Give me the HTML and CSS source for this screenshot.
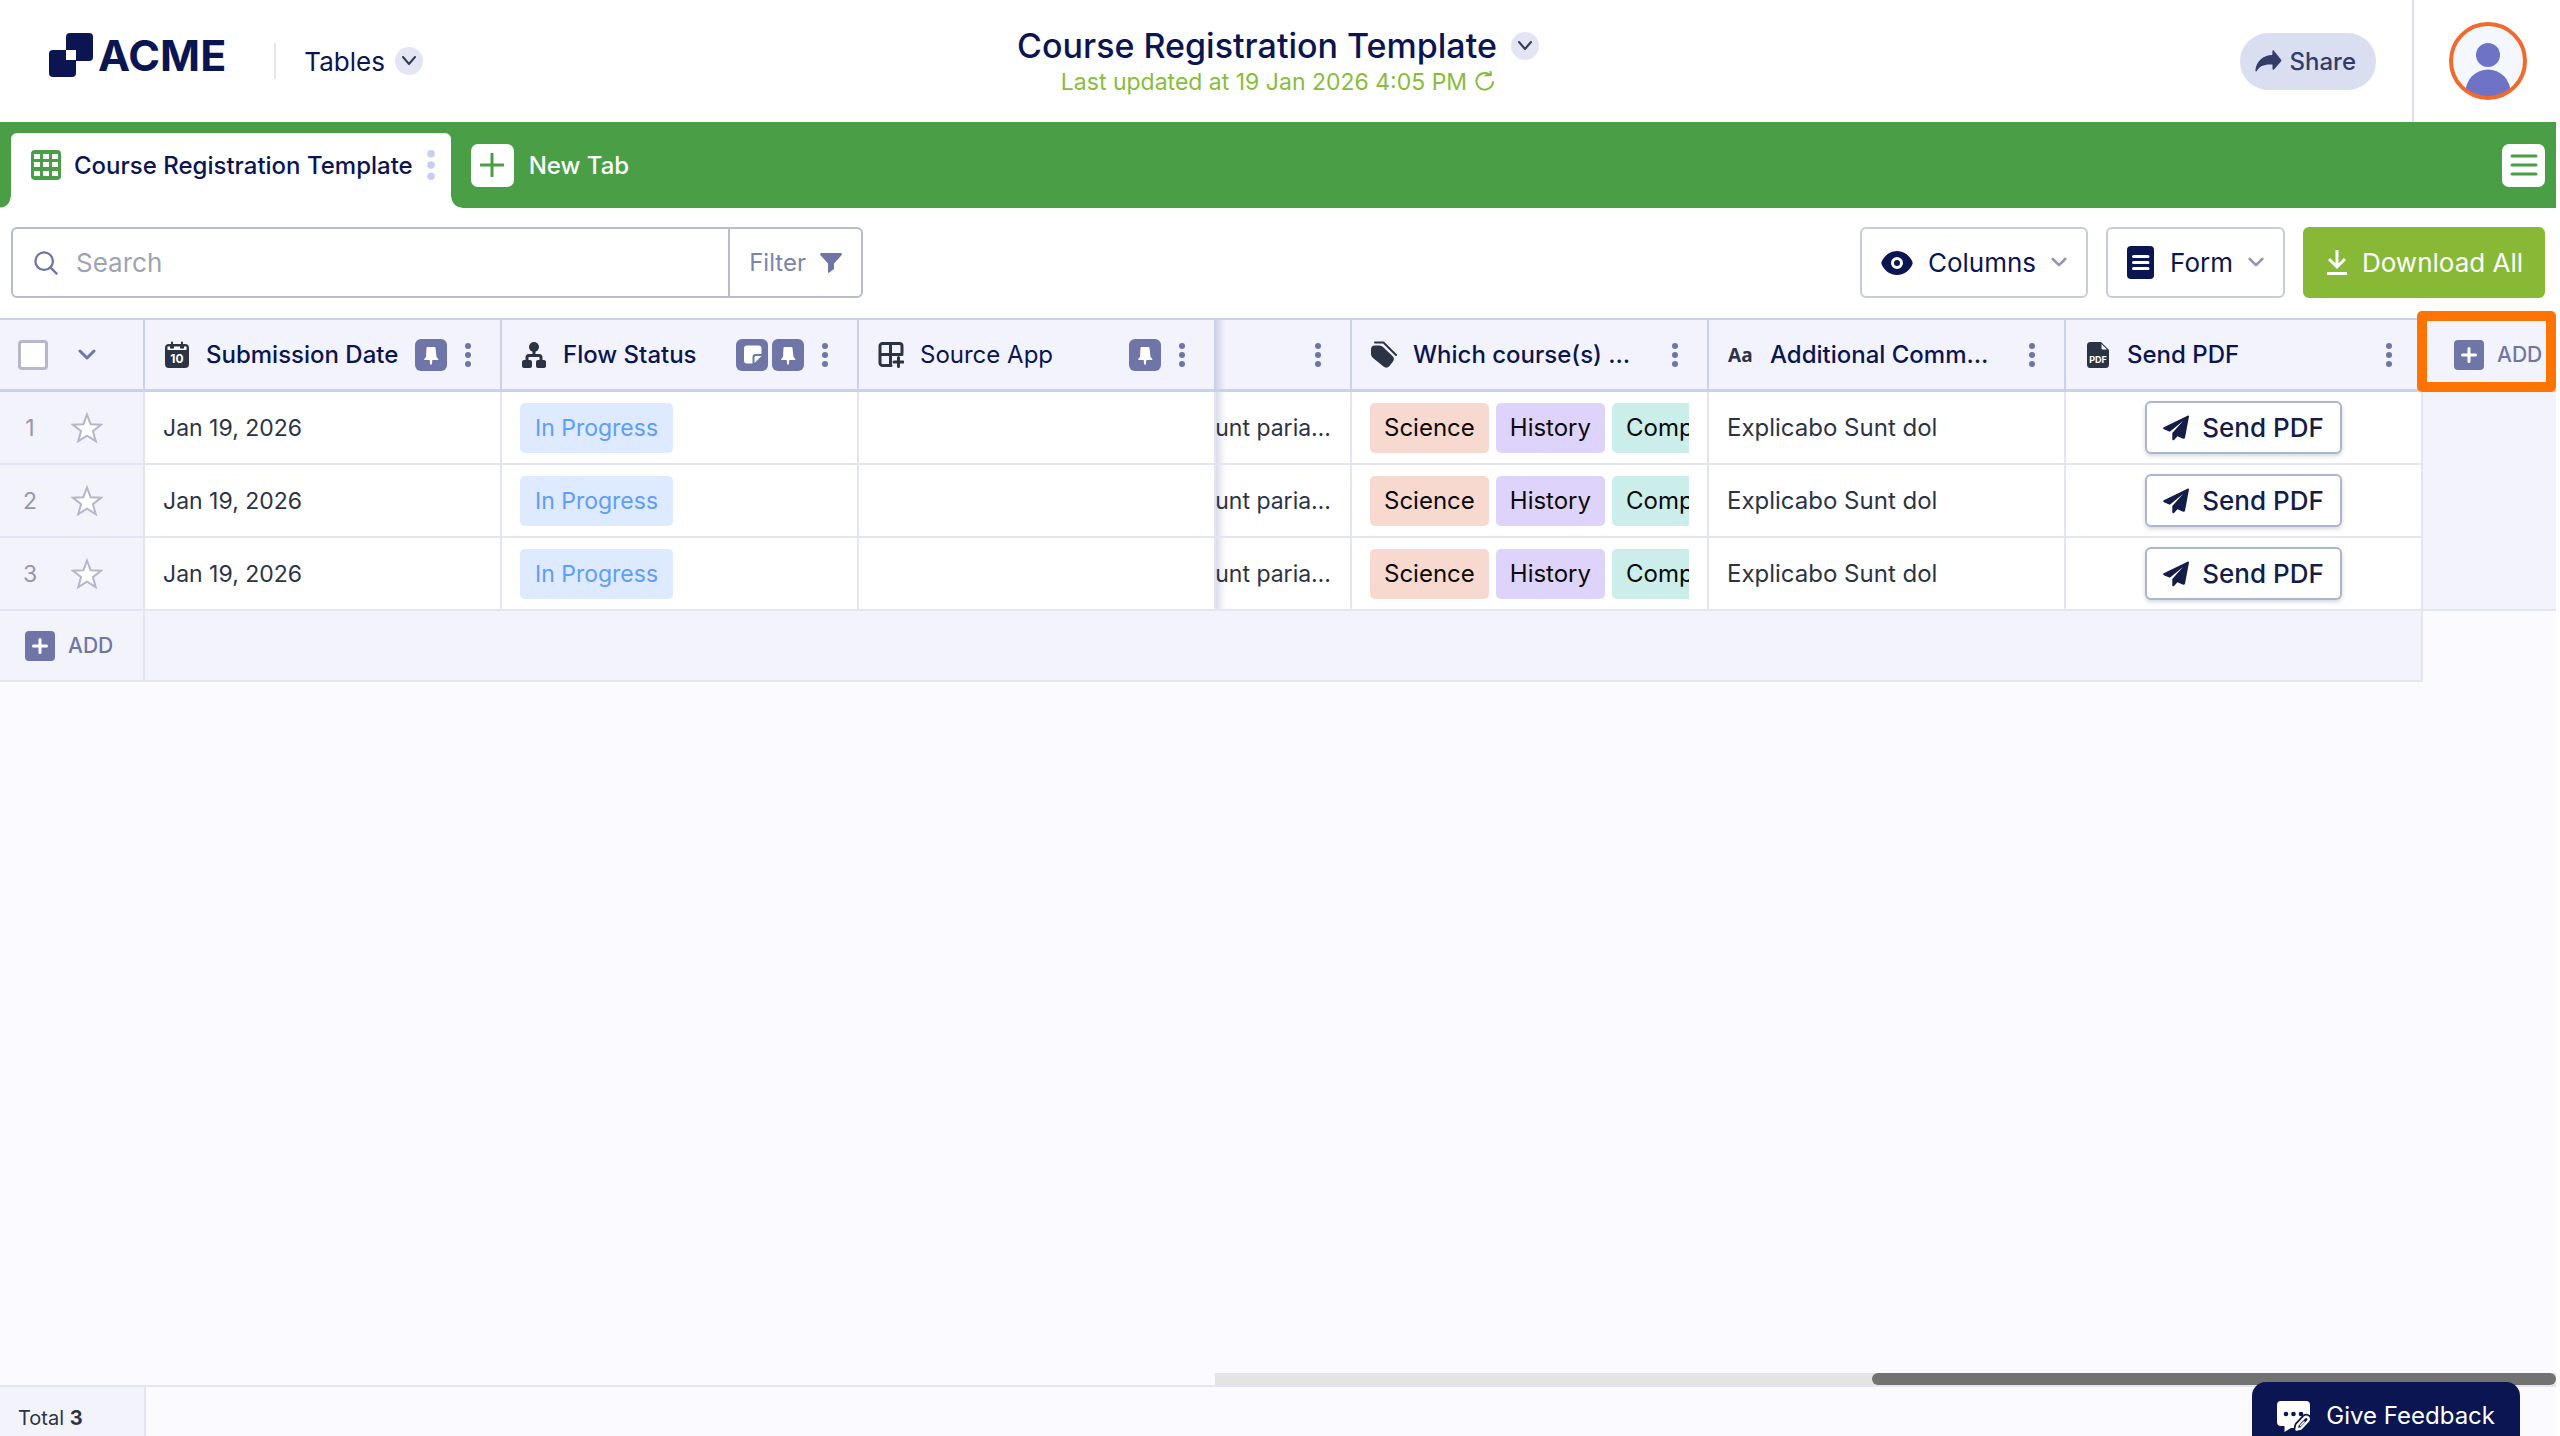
FILE: index.html
```html
<!DOCTYPE html>
<html lang="en">
<head>
  <meta charset="UTF-8" />
  <title>Course Registration Template - Tables</title>
  <meta name="viewport" content="width=device-width, initial-scale=1.0" />
  <link rel="stylesheet" href="styles.css">
</head>
<body>
  <!-- shared icons -->
  <svg class="sprite" aria-hidden="true">
    <symbol id="i-chevron" viewBox="0 0 18 12"><path d="M2 2l7 7 7-7" fill="none" stroke="currentColor" stroke-width="3" stroke-linecap="round" stroke-linejoin="round"/></symbol>
    <symbol id="i-chevron-thin" viewBox="0 0 14 10"><path d="M1 1l6 7 6-7" fill="none" stroke="currentColor" stroke-width="2" stroke-linecap="round" stroke-linejoin="round"/></symbol>
    <symbol id="i-dots" viewBox="0 0 8 24"><circle cx="4" cy="3" r="3"/><circle cx="4" cy="12" r="3"/><circle cx="4" cy="21" r="3"/></symbol>
    <symbol id="i-pin" viewBox="0 0 32 32"><path d="M11.500 9q0-1 1-1h7q1 0 1 1l1 9q1.500 1 2 3h-6.200l-.4 4.500h-1.800l-.4-4.500H9q.5-2 2-3z" fill="#fff"/></symbol>
    <symbol id="i-note" viewBox="0 0 32 32"><path d="M11 6.500h11.500a3 3 0 0 1 3 3V15h-6a3 3 0 0 0-3 3v6.500H11a3 3 0 0 1-3-3v-12a3 3 0 0 1 3-3z" fill="#fff"/><path d="M18.500 24v-5.500a1.500 1.500 0 0 1 1.500-1.500h5.500z" fill="#fff"/></symbol>
    <symbol id="i-plus" viewBox="0 0 30 30"><path d="M15 8.500v13M8.500 15h13" stroke="#fff" stroke-width="3" stroke-linecap="round"/></symbol>
    <symbol id="i-star" viewBox="0 0 32 32"><path d="M16 2.500l3.600 9.700 10.400.5-8.100 6.400 2.900 10.100L16 23.700l-8.800 5.500 2.900-10.100L2 12.700l10.400-.5z" fill="#fff" stroke="#b7b6cc" stroke-width="2"/></symbol>
    <symbol id="i-plane" viewBox="0 0 26 26"><path d="M25 .5L.8 12.200c-.9.5-.8 1.700.1 2.100l5.900 2.400L20 6 9.300 18v6.300c0 1 1.200 1.300 1.800.7l3.300-3.800 5.800 2.500c.8.3 1.600-.1 1.800-.9L26 1.500c.1-.9-.4-1.200-1-1z" fill="currentColor"/></symbol>
  </svg>

  <div class="app">
    <header class="topbar">
      <div class="topbar-left">
        <a class="logo" href="#" aria-label="ACME">
          <svg width="44" height="44" viewBox="0 0 44 44">
            <rect x="17" y="0" width="27" height="28" rx="4" fill="#0a1551"/>
            <rect x="0" y="17" width="27" height="27" rx="4" fill="#0a1551"/>
            <rect x="17" y="17" width="10" height="10" fill="#fff"/>
          </svg>
          <span>ACME</span>
        </a>
        <button class="app-menu" type="button">Tables
          <span class="round"><svg width="14" height="10"><use href="#i-chevron-thin"/></svg></span>
        </button>
      </div>
      <div class="topbar-center">
        <h1>Course Registration Template
          <button class="round" type="button" aria-label="Table options"><svg width="14" height="10"><use href="#i-chevron-thin"/></svg></button>
        </h1>
        <p class="updated">Last updated at 19 Jan 2026 4:05 PM
          <svg width="20" height="22" viewBox="0 0 20 22"><path d="M14 3.200A8.300 8.300 0 1 0 18 11M10.500 4.500l5.500-.500-.500-3.500" fill="none" stroke="currentColor" stroke-width="2" stroke-linecap="round" stroke-linejoin="round"/></svg>
        </p>
      </div>
      <div class="topbar-right">
        <button class="share" type="button">
          <svg width="27" height="22" viewBox="0 0 27 22"><path d="M17.500 0.600c.5-.5 1-.4 1.400.1L26 9.500c.5.600.5 1.300 0 1.900l-7.100 8.100c-.6.600-1.400.2-1.400-.5v-4.500C9 14 4.500 16 1.800 21c-.5.800-1.400.5-1.400-.4C1 11.500 8 5 17.300 5z" fill="currentColor"/></svg>
          Share
        </button>
        <div class="account">
          <svg class="avatar" width="78" height="78" viewBox="0 0 78 78">
            <defs><clipPath id="face"><circle cx="39" cy="39" r="37"/></clipPath></defs>
            <circle cx="39" cy="39" r="37" fill="#f5f7ff"/>
            <g clip-path="url(#face)" fill="#6f73c5"><circle cx="39" cy="33" r="12"/><circle cx="39" cy="70" r="22.500"/></g>
            <circle cx="39" cy="39" r="37" fill="none" stroke="#f16a2b" stroke-width="4"/>
          </svg>
        </div>
      </div>
    </header>

    <nav class="tabs">
      <div class="tab">
        <svg width="30" height="30" viewBox="0 0 30 30"><rect width="30" height="30" rx="4" fill="#499e46"/><path d="M3 4h6v5H3zM12 4h6v5h-6zM21 4h6v5h-6zM3 12h6v5H3zM12 12h6v5h-6zM21 12h6v5h-6zM3 21h6v5H3zM12 21h6v5h-6zM21 21h6v5h-6z" fill="#fff"/></svg>
        <a href="#">Course Registration Template</a>
        <button class="dots tab-dots" type="button" aria-label="Tab options"><svg width="10" height="30"><use href="#i-dots"/></svg></button>
      </div>
      <button class="new-tab" type="button">
        <span class="square"><svg width="24" height="24" viewBox="0 0 24 24"><path d="M12 1v22M1 12h22" stroke="#499e46" stroke-width="3" stroke-linecap="round"/></svg></span>
        New Tab
      </button>
      <button class="square menu" type="button" aria-label="All tabs"><svg width="28" height="24" viewBox="0 0 28 24"><path d="M2 3h24M2 12h24M2 21h24" stroke="#499e46" stroke-width="3" stroke-linecap="round"/></svg></button>
    </nav>

    <div class="toolbar">
      <div class="search">
        <svg width="24" height="26" viewBox="0 0 26 26"><circle cx="11" cy="11" r="9.500" fill="none" stroke="#6f76a7" stroke-width="2.500"/><path d="M18 18l6.500 6.500" stroke="#6f76a7" stroke-width="2.500" stroke-linecap="round"/></svg>
        <input type="text" placeholder="Search" aria-label="Search">
        <button class="filter" type="button">Filter
          <svg width="22" height="20" viewBox="0 0 22 20"><path d="M1.500 0h19c1.200 0 1.800 1.200 1 2.200L14 10.500V16l-5 3.700c-.6.400-1 .1-1-.6v-8.600L.5 2.200C-.3 1.200.3 0 1.500 0z" fill="#6f76a7"/></svg>
        </button>
      </div>
      <div class="actions">
        <button class="btn" type="button">
          <svg width="32" height="24" viewBox="0 0 32 24"><path d="M16 0C24 0 29 5.500 31.300 10.500q.7 1.500 0 3C29 18.500 24 24 16 24S3 18.500.7 13.500q-.7-1.500 0-3C3 5.500 8 0 16 0z" fill="#0a1551"/><circle cx="16" cy="12" r="4.500" fill="none" stroke="#fff" stroke-width="3"/></svg>
          Columns
          <svg class="caret" width="16" height="11"><use href="#i-chevron"/></svg>
        </button>
        <button class="btn" type="button">
          <svg width="28" height="34" viewBox="0 0 28 34"><rect width="27" height="33" rx="4" fill="#0a1551"/><path d="M6.500 10.500h14.500M6.500 16.500h14.500M6.500 22.500h14.500" stroke="#fff" stroke-width="3" stroke-linecap="round"/></svg>
          Form
          <svg class="caret" width="16" height="11"><use href="#i-chevron"/></svg>
        </button>
        <button class="btn download" type="button">
          <svg width="20" height="25" viewBox="0 0 20 25"><path d="M10 0v16M2 9l8 8 8-8M0 23.500h20" fill="none" stroke="#fff" stroke-width="3"/></svg>
          Download All
        </button>
      </div>
    </div>

    <main class="sheet">
      <table>
        <colgroup>
          <col class="w-index"><col class="w-col"><col class="w-col"><col class="w-col"><col class="w-cut"><col class="w-col"><col class="w-col"><col class="w-col"><col>
        </colgroup>
        <thead>
          <tr>
            <th>
              <div class="pick">
                <input type="checkbox" aria-label="Select all rows">
                <button type="button" aria-label="Selection options"><svg width="18" height="12"><use href="#i-chevron"/></svg></button>
              </div>
            </th>
            <th>
              <div class="head">
                <svg class="type" width="24" height="28" viewBox="0 0 24 28"><path d="M4 3h16a4 4 0 0 1 4 4v16a4 4 0 0 1-4 4H4a4 4 0 0 1-4-4V7a4 4 0 0 1 4-4z" fill="#2c3345"/><path d="M2.500 5.500H5v2h4v-2h6v2h4v-2h2.500V9h-19z" fill="#fff"/><path d="M7 1.500v5M17 1.500v5" stroke="#2c3345" stroke-width="2" stroke-linecap="round"/><text x="12" y="22" text-anchor="middle" font-size="12" font-weight="700" fill="#fff">10</text></svg>
                <span>Submission Date</span>
                <button class="badge" type="button" aria-label="Pinned"><svg width="32" height="32"><use href="#i-pin"/></svg></button>
                <button class="dots" type="button" aria-label="Column options"><svg width="8" height="24"><use href="#i-dots"/></svg></button>
              </div>
            </th>
            <th>
              <div class="head">
                <svg class="type" width="24" height="28" viewBox="0 0 24 28"><g fill="#2c3345"><circle cx="12" cy="6" r="5"/><rect x="0" y="19" width="10" height="8" rx="2"/><rect x="14" y="19" width="10" height="8" rx="2"/></g><path d="M12 8v7M5 20v-3.500a2 2 0 0 1 2-2h10a2 2 0 0 1 2 2V20" fill="none" stroke="#2c3345" stroke-width="3"/></svg>
                <span>Flow Status</span>
                <button class="badge" type="button" aria-label="Note"><svg width="32" height="32"><use href="#i-note"/></svg></button>
                <button class="badge" type="button" aria-label="Pinned"><svg width="32" height="32"><use href="#i-pin"/></svg></button>
                <button class="dots" type="button" aria-label="Column options"><svg width="8" height="24"><use href="#i-dots"/></svg></button>
              </div>
            </th>
            <th>
              <div class="head plain">
                <svg class="type" width="26" height="26" viewBox="0 0 26 26"><path d="M24 11V4a2.500 2.500 0 0 0-2.500-2.500h-17A2.500 2.500 0 0 0 2 4v17a2.500 2.500 0 0 0 2.500 2.500H13M12.500 2v21M2 12.500h22M20.500 15.500v9M16 20h9" fill="none" stroke="#2c3345" stroke-width="3" stroke-linecap="round"/></svg>
                <span>Source App</span>
                <button class="badge" type="button" aria-label="Pinned"><svg width="32" height="32"><use href="#i-pin"/></svg></button>
                <button class="dots" type="button" aria-label="Column options"><svg width="8" height="24"><use href="#i-dots"/></svg></button>
              </div>
            </th>
            <th class="edge">
              <div class="head">
                <span></span>
                <button class="dots" type="button" aria-label="Column options"><svg width="8" height="24"><use href="#i-dots"/></svg></button>
              </div>
            </th>
            <th>
              <div class="head">
                <svg class="type" width="26" height="28" viewBox="0 0 26 28"><path d="M0 8.500q0-4 4-4h4.500q2 0 3.500 1.500l9.500 9q2.500 2.500.5 5.500l-3.500 4.500q-3 3-6 .5L2 17q-2-1.500-2-4z" fill="#2c3345"/><path d="M4 1.500h8.500L25 14" fill="none" stroke="#2c3345" stroke-width="2" stroke-linecap="round"/></svg>
                <span>Which course(s) …</span>
                <button class="dots" type="button" aria-label="Column options"><svg width="8" height="24"><use href="#i-dots"/></svg></button>
              </div>
            </th>
            <th>
              <div class="head">
                <b class="type letters">Aa</b>
                <span>Additional Comm…</span>
                <button class="dots" type="button" aria-label="Column options"><svg width="8" height="24"><use href="#i-dots"/></svg></button>
              </div>
            </th>
            <th>
              <div class="head">
                <svg class="type" width="22" height="28" viewBox="0 0 22 28"><path d="M3.500 1H14l8 8v14.500a3.500 3.500 0 0 1-3.500 3.500h-15A3.500 3.500 0 0 1 0 23.500v-19A3.500 3.500 0 0 1 3.500 1z" fill="#2c3345"/><path d="M14.500 3v4q0 1.500 1.500 1.500h4z" fill="#fff"/><text x="11" y="22" text-anchor="middle" font-size="9" font-weight="700" fill="#fff">PDF</text></svg>
                <span>Send PDF</span>
                <button class="dots" type="button" aria-label="Column options"><svg width="8" height="24"><use href="#i-dots"/></svg></button>
              </div>
            </th>
            <th class="add-col">
              <button class="add" type="button"><svg width="30" height="30"><use href="#i-plus"/></svg>ADD</button>
              <div class="highlight"></div>
            </th>
          </tr>
        </thead>
        <tbody>
          <tr>
            <th scope="row"><div class="row-id"><span>1</span><button type="button" aria-label="Star row 1"><svg width="32" height="32"><use href="#i-star"/></svg></button></div></th>
            <td>Jan 19, 2026</td>
            <td><div class="tags"><span class="tag blue">In Progress</span></div></td>
            <td></td>
            <td class="edge"><div class="cut">unt paria…</div></td>
            <td class="answer"><div class="tags"><span class="tag peach">Science</span><span class="tag violet">History</span><span class="tag mint">Comp</span></div></td>
            <td class="answer">Explicabo Sunt dol</td>
            <td class="send"><button type="button"><svg width="26" height="26"><use href="#i-plane"/></svg>Send PDF</button></td>
            <td class="blank" rowspan="3"></td>
          </tr>
          <tr>
            <th scope="row"><div class="row-id"><span>2</span><button type="button" aria-label="Star row 2"><svg width="32" height="32"><use href="#i-star"/></svg></button></div></th>
            <td>Jan 19, 2026</td>
            <td><div class="tags"><span class="tag blue">In Progress</span></div></td>
            <td></td>
            <td class="edge"><div class="cut">unt paria…</div></td>
            <td class="answer"><div class="tags"><span class="tag peach">Science</span><span class="tag violet">History</span><span class="tag mint">Comp</span></div></td>
            <td class="answer">Explicabo Sunt dol</td>
            <td class="send"><button type="button"><svg width="26" height="26"><use href="#i-plane"/></svg>Send PDF</button></td>
          </tr>
          <tr>
            <th scope="row"><div class="row-id"><span>3</span><button type="button" aria-label="Star row 3"><svg width="32" height="32"><use href="#i-star"/></svg></button></div></th>
            <td>Jan 19, 2026</td>
            <td><div class="tags"><span class="tag blue">In Progress</span></div></td>
            <td></td>
            <td class="edge"><div class="cut">unt paria…</div></td>
            <td class="answer"><div class="tags"><span class="tag peach">Science</span><span class="tag violet">History</span><span class="tag mint">Comp</span></div></td>
            <td class="answer">Explicabo Sunt dol</td>
            <td class="send"><button type="button"><svg width="26" height="26"><use href="#i-plane"/></svg>Send PDF</button></td>
          </tr>
        </tbody>
        <tfoot>
          <tr>
            <td><button class="add" type="button"><svg width="30" height="30"><use href="#i-plus"/></svg>ADD</button></td>
            <td colspan="7"></td>
          </tr>
        </tfoot>
      </table>
    </main>

    <div class="scrollbar"><div class="thumb"></div></div>
    <footer class="status">
      <div class="total">Total <b>3</b></div>
    </footer>
  </div>

  <button class="feedback" type="button">
    <svg width="34" height="32" viewBox="0 0 34 32"><path d="M4 1h25a4 4 0 0 1 4 4v10l-4 1-9 9-1 3-5 0-6.500 4V26H4a4 4 0 0 1-4-4V5a4 4 0 0 1 4-4z" fill="#fff"/><g fill="#0a1551"><circle cx="9" cy="14" r="2.300"/><circle cx="16.500" cy="14" r="2.300"/><circle cx="24" cy="14" r="2.300"/></g><path d="M20.500 25l7-7.500q2-1.500 3.500 0t0 3.500l-7 7.500-4.500 1z" fill="#0a1551" stroke="#0a1551" stroke-width="6" stroke-linejoin="round"/><path d="M20.500 25l7-7.500q2-1.500 3.500 0t0 3.500l-7 7.500-4.500 1z" fill="#0a1551" stroke="#fff" stroke-width="2.500" stroke-linejoin="round"/><path d="M23 26l4.500-4.500" stroke="#fff" stroke-width="1.500"/></svg>
    Give Feedback
  </button>
</body>
</html>
```
FILE: styles.css
```css
* { box-sizing: border-box; }
body {
  margin: 0;
  padding-right: 4px;
  background: #fff;
  color: #2c3345;
  font-family: Inter, "Liberation Sans", sans-serif;
  font-size: 24px;
  overflow: hidden;
}
button {
  border: none;
  background: none;
  padding: 0;
  margin: 0;
  font: inherit;
  color: inherit;
  cursor: pointer;
}
a { color: inherit; text-decoration: none; }
svg { display: block; flex: none; }
.sprite { display: none; }
.app { display: flex; flex-direction: column; height: 100vh; background: #fafaff; }

/* top bar */
.topbar {
  display: grid;
  grid-template-columns: 1fr auto 1fr;
  height: 122px;
  background: #fff;
  color: #0a1551;
}
.topbar-left { display: flex; align-items: center; padding-left: 49px; }
.logo {
  display: flex;
  align-items: center;
  gap: 5px;
  padding-bottom: 12px;
  font-size: 43px;
  font-weight: 700;
}
.app-menu {
  display: flex;
  align-items: center;
  gap: 10px;
  height: 36px;
  margin-left: 48px;
  padding-left: 28px;
  border-left: 2px solid #e3e5f5;
  font-size: 26px;
}
.round {
  display: flex;
  align-items: center;
  justify-content: center;
  width: 28px;
  height: 28px;
  border-radius: 50%;
  background: #e3e5f5;
  color: #343c55;
}
.topbar-center { padding-top: 25px; }
h1 {
  display: flex;
  align-items: center;
  gap: 14px;
  margin: 0;
  font-size: 34px;
  line-height: 42px;
  font-weight: 500;
}
.updated {
  display: flex;
  align-items: center;
  justify-content: center;
  gap: 8px;
  margin: 0;
  color: #87bd3a;
  font-size: 23px;
  line-height: 30px;
}
.topbar-right { display: flex; align-items: center; justify-content: flex-end; gap: 36px; }
.share {
  display: flex;
  align-items: center;
  gap: 8px;
  height: 57px;
  padding: 0 20px 0 15px;
  border-radius: 29px;
  background: #dadef1;
  color: #343c6a;
  font-weight: 500;
}
.account {
  display: flex;
  align-items: center;
  height: 100%;
  padding: 0 29px 0 35px;
  border-left: 2px solid #dadef1;
}

/* tabs */
.tabs {
  display: flex;
  align-items: center;
  height: 86px;
  padding: 0 11px;
  background: #499e46;
  color: #fff;
  font-weight: 500;
}
.tab {
  position: relative;
  display: flex;
  align-items: center;
  align-self: flex-end;
  gap: 13px;
  height: 75px;
  padding: 0 15px 11px 20px;
  border-radius: 6px 6px 0 0;
  background: #fff;
  color: #0a1551;
}
/* rounded feet on both sides of the active tab */
.tab::before, .tab::after {
  content: "";
  position: absolute;
  bottom: 0;
  width: 11px;
  height: 11px;
}
.tab::before { right: 100%; background: radial-gradient(circle at 0 0, #499e46 10px, #fff 11px); }
.tab::after { left: 100%; background: radial-gradient(circle at 100% 0, #499e46 10px, #fff 11px); }
.new-tab { display: flex; align-items: center; gap: 15px; margin-left: 20px; }
.square {
  display: flex;
  align-items: center;
  justify-content: center;
  width: 43px;
  height: 43px;
  border-radius: 7px;
  background: #fff;
}
.menu { margin-left: auto; }
.dots { fill: #6f76a7; }
.tab-dots { fill: #c8ceed; }

/* toolbar */
.toolbar {
  display: flex;
  justify-content: space-between;
  padding: 19px 11px 20px;
  background: #fff;
  font-size: 26px;
}
.search {
  display: flex;
  align-items: center;
  width: 852px;
  height: 71px;
  padding-left: 21px;
  border: 2px solid #b8bcd0;
  border-radius: 6px;
}
.search input {
  flex: 1;
  min-width: 0;
  padding: 0 18px;
  border: none;
  outline: none;
  font: inherit;
}
.search input::placeholder { color: #9ea3b3; }
.filter {
  display: flex;
  align-items: center;
  gap: 14px;
  height: 100%;
  padding: 0 19px;
  border-left: 2px solid #b8bcd0;
  color: #7d83ad;
  font-size: 24px;
}
.actions { display: flex; gap: 18px; }
.btn {
  display: flex;
  align-items: center;
  gap: 15px;
  padding: 0 19px;
  border: 2px solid #c8cbdc;
  border-radius: 6px;
  background: #fff;
  color: #0a1551;
}
.caret { color: #9795b0; }
.download { padding: 0 20px 0 22px; border-color: #87b936; background: #87b936; color: #fff; }

/* table */
.sheet { flex: 1; }
table { width: 100%; table-layout: fixed; border-collapse: separate; border-spacing: 0; }
.w-index { width: 145px; }
.w-col { width: 357px; }
.w-cut { width: 136px; }
th, td { padding: 0; text-align: left; font-weight: 400; }
thead th {
  height: 74px;
  border: solid #cbd0ec;
  border-width: 2px 2px 3px 0;
  background: #f3f3fe;
}
tbody td, tbody th {
  height: 73px;
  border: solid #e3e5f5;
  border-width: 0 2px 2px 0;
  background: #fff;
}
tbody td { padding: 0 18px; font-size: 23px; }
tbody .answer { font-size: 24px; }
tbody th, tbody .blank, tfoot td { background: #f3f3fc; }
tfoot td { height: 71px; border: solid #e3e5f5; border-width: 0 2px 2px 0; }
.head {
  display: flex;
  align-items: center;
  padding: 0 28px 0 19px;
  color: #0a1551;
  font-weight: 500;
}
.plain { font-weight: 400; }
.head span { flex: 1; white-space: nowrap; }
.type { width: 26px; margin-right: 16px; }
.letters { font-family: "Noto Sans", sans-serif; font-size: 19px; color: #2c3345; }
.badge { margin-right: 4px; border-radius: 6px; background: #6f76a7; }
.head .dots { margin-left: 13px; }
.pick { display: flex; align-items: center; gap: 30px; padding-left: 18px; color: #6f76a7; }
.pick input {
  appearance: none;
  width: 30px;
  height: 30px;
  margin: 0;
  border: 3px solid #b7b6cc;
  border-radius: 4px;
  background: #fff;
}
.row-id { display: flex; align-items: center; gap: 31px; padding-left: 20px; color: #9795b0; font-size: 23px; }
.row-id span { width: 20px; text-align: center; }
/* shade cast by the pinned columns */
thead .edge, tbody .edge {
  background-image: linear-gradient(to right, rgba(111, 118, 167, 0.25), rgba(111, 118, 167, 0) 10px);
}
tbody .edge { padding: 0 19px 0 0; }
.cut { display: flex; justify-content: flex-end; overflow: hidden; white-space: nowrap; }
.tags { display: flex; gap: 7px; overflow: hidden; }
.tag {
  flex: none;
  padding: 0 14px;
  border-radius: 5px;
  line-height: 50px;
  color: #0a0a0a;
}
.blue { padding: 0 15px; background: #ddeaff; color: #5f9df7; }
.peach { background: #f8d9d0; }
.violet { background: #ded3fb; }
.mint { background: #cbeeea; }
.send button {
  display: flex;
  align-items: center;
  gap: 13px;
  height: 53px;
  margin: 0 auto;
  padding: 0 16px;
  border: 2px solid #abb5cc;
  border-radius: 6px;
  background: #fff;
  box-shadow: 0 2px 4px rgba(44, 51, 69, 0.2);
  color: #141d48;
  font-size: 26px;
  font-weight: 500;
}
.add {
  display: flex;
  align-items: center;
  gap: 13px;
  padding-left: 25px;
  color: #6f76a7;
  font-size: 21px;
  font-weight: 500;
}
.add svg { border-radius: 4px; background: #6f76a7; }
thead .add-col { position: relative; border-right: none; }
.add-col .add { padding-left: 31px; }
.highlight {
  position: absolute;
  inset: -9px 0 -3px -6px;
  border: 10px solid #ff7300;
  border-radius: 5px;
}
tbody .blank { border-right: none; }

/* bottom */
.scrollbar { height: 12px; margin-left: 1215px; background: #e4e4e4; }
.thumb { width: 51%; height: 100%; margin-left: auto; border-radius: 6px; background: #727272; }
.status { border-top: 2px solid #e3e5f5; font-size: 20px; line-height: 24px; }
.total { width: 146px; padding: 19px 18px 6px; border-right: 2px solid #e3e5f5; background: #f3f3fc; }
.feedback {
  position: fixed;
  right: 40px;
  bottom: 0;
  display: flex;
  align-items: center;
  gap: 15px;
  height: 54px;
  padding: 13px 25px 0;
  border-radius: 14px 14px 0 0;
  background: #0a1551;
  color: #fff;
}
```
